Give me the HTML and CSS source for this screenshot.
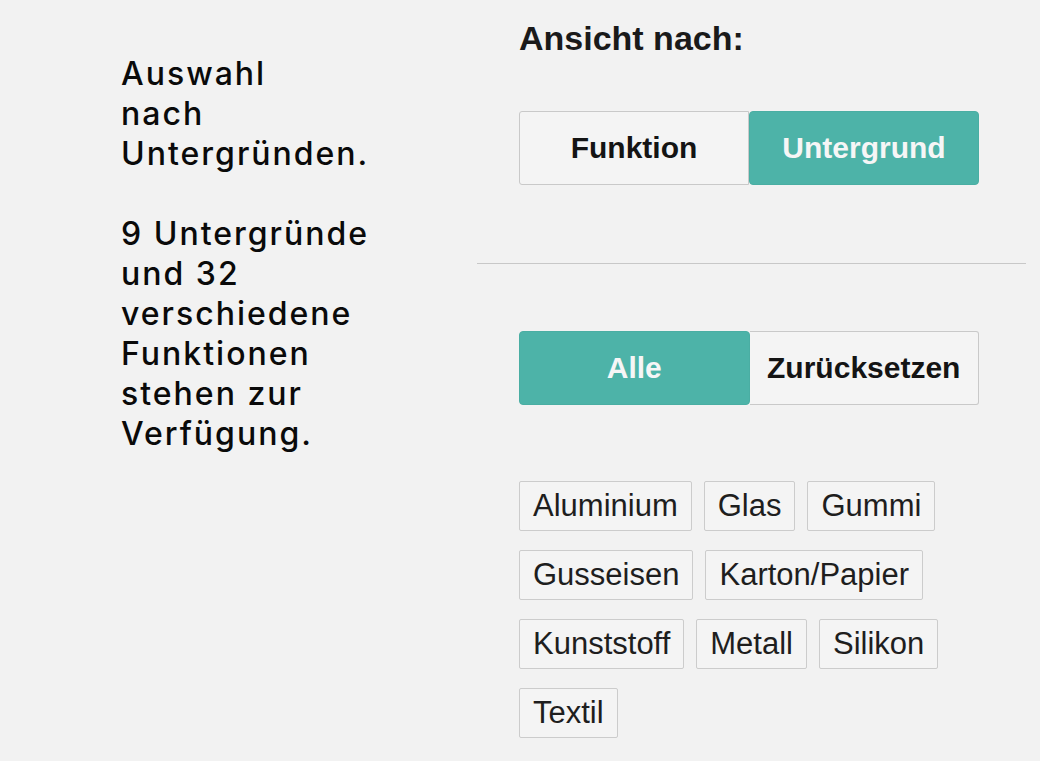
FILE: index.html
```html
<!DOCTYPE html>
<html lang="de">
<head>
<meta charset="utf-8">
<title>Ansicht nach</title>
<link rel="stylesheet" href="styles.css">
</head>
<body>
<div class="page">
  <div class="intro">
    <p class="intro-text">Auswahl<br>nach<br>Untergründen.</p>
    <p class="intro-text">9 Untergründe<br>und 32<br>verschiedene<br>Funktionen<br>stehen zur<br>Verfügung.</p>
  </div>
  <div class="panel">
    <div class="panel-inner">
      <h2 class="heading">Ansicht nach:</h2>
      <div class="seg seg-top">
        <button class="seg-btn seg-off">Funktion</button>
        <button class="seg-btn seg-on">Untergrund</button>
      </div>
    </div>
    <hr class="divider">
    <div class="panel-inner">
      <div class="seg seg-filter">
        <button class="seg-btn seg-on seg-first">Alle</button>
        <button class="seg-btn seg-off seg-last">Zurücksetzen</button>
      </div>
      <div class="tags">
        <span class="tag">Aluminium</span>
        <span class="tag">Glas</span>
        <span class="tag">Gummi</span>
        <span class="tag">Gusseisen</span>
        <span class="tag">Karton/Papier</span>
        <span class="tag">Kunststoff</span>
        <span class="tag">Metall</span>
        <span class="tag">Silikon</span>
        <span class="tag">Textil</span>
      </div>
    </div>
  </div>
</div>
</body>
</html>
```
FILE: styles.css
```css
html, body {
  margin: 0;
  padding: 0;
  background: #f2f2f2;
}
body {
  width: 1040px;
  height: 761px;
  overflow: hidden;
}
.page {
  display: flex;
  align-items: flex-start;
}
.intro {
  width: 477px;
  flex: 0 0 477px;
  box-sizing: border-box;
  padding: 54px 0 0 121px;
}
.intro-text {
  margin: 0 0 40px 0;
  font-family: Inter, "Liberation Sans", sans-serif;
  font-weight: 500;
  font-size: 32px;
  line-height: 40px;
  letter-spacing: 2px;
  color: #0a0a0a;
}
.panel {
  width: 549px;
  padding-top: 18px;
}
.panel-inner {
  padding-left: 42px;
}
.heading {
  margin: 0;
  font-family: "Liberation Sans", Arial, sans-serif;
  font-weight: 700;
  font-size: 34px;
  line-height: 40px;
  color: #1a1a1a;
}
.seg {
  display: flex;
  width: 460px;
}
.seg-top {
  margin-top: 53px;
}
.seg-filter {
  margin-top: 67px;
}
.seg-btn {
  flex: 1 1 0;
  height: 74px;
  margin: 0;
  padding: 0;
  font-family: "Liberation Sans", Arial, sans-serif;
  font-weight: 700;
  font-size: 30px;
  box-sizing: border-box;
  cursor: pointer;
}
.seg-off {
  background: #f4f4f4;
  color: #141414;
  border: 1px solid #c9c9c9;
  border-radius: 3px 0 0 3px;
}
.seg-on {
  background: #4db3a8;
  color: #f6f6f6;
  border: 1px solid #4aaea3;
  border-radius: 4px;
}
.seg-first {
  border-radius: 4px;
}
.seg-last {
  border-radius: 0 3px 3px 0;
  border-left: none;
}
.divider {
  margin: 78px 0 0 0;
  border: none;
  height: 1px;
  background: #c8c8c8;
}
.tags {
  margin-top: 76px;
  width: 460px;
  display: flex;
  flex-wrap: wrap;
  gap: 19px 12px;
}
.tag {
  display: inline-flex;
  align-items: center;
  height: 50px;
  box-sizing: border-box;
  padding: 0 13px;
  border: 1px solid #cccccc;
  border-radius: 2px;
  background: #f4f4f4;
  font-family: "Liberation Sans", Arial, sans-serif;
  font-size: 31px;
  color: #1e1e1e;
}
```
